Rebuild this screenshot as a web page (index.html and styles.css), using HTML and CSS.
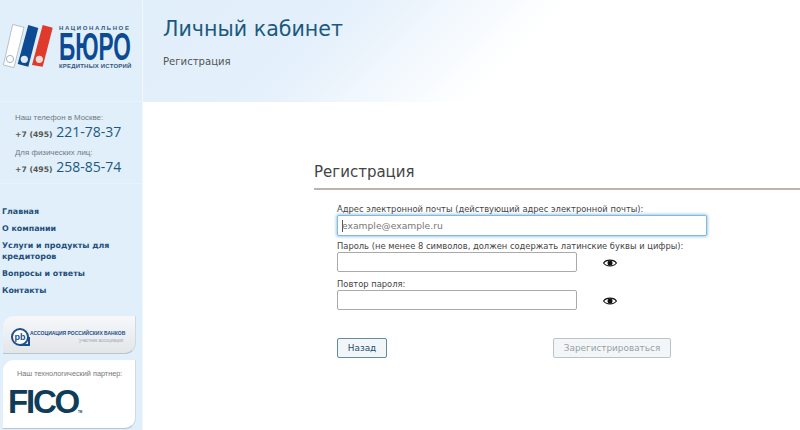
FILE: index.html
```html
<!DOCTYPE html>
<html lang="ru">
<head>
    <meta charset="UTF-8">
    <meta name="viewport" content="width=device-width, initial-scale=1.0">
    <title>Личный кабинет</title>
    <link rel="stylesheet" href="styles.css">
</head>
<body>

    <div class="page">
        <!-- Левая колонка -->
        <aside class="sidebar">
            <div class="logo">
                <svg class="logo-books" width="50" height="44" viewBox="0 0 50 44">
                    <path d="M9.7 .4 L21 3.3 L11 43.6 L.4 41 Z" fill="#fff" stroke="#a9b4bc" stroke-width=".8"/>
                    <circle cx="7" cy="35" r="3.6" fill="none" stroke="#a9b4bc"/>
                    <path d="M25.3 1 L35.3 4 L25.3 42.7 L14.7 40 Z" fill="#0d4a94"/>
                    <circle cx="21.3" cy="35.3" r="3.6" fill="#dfeaf4"/>
                    <path d="M39.7 1 L49.7 3.7 L39.7 42.7 L29 41 Z" fill="#e03a2c"/>
                    <circle cx="36.3" cy="35.3" r="3.6" fill="#f3d9d4"/>
                </svg>
                <div class="logo-text">
                    <span class="logo-top">НАЦИОНАЛЬНОЕ</span>
                    <span class="logo-main">БЮРО</span>
                    <span class="logo-bottom">КРЕДИТНЫХ ИСТОРИЙ</span>
                </div>
            </div>

            <div class="phones">
                <p class="phone-label">Наш телефон в Москве:</p>
                <p class="phone"><span class="phone-code">+7 (495)</span> 221-78-37</p>
                <p class="phone-label second">Для физических лиц:</p>
                <p class="phone"><span class="phone-code">+7 (495)</span> 258-85-74</p>
            </div>

            <nav class="menu">
                <a href="#">Главная</a>
                <a href="#">О компании</a>
                <a href="#">Услуги и продукты для кредиторов</a>
                <a href="#">Вопросы и ответы</a>
                <a href="#">Контакты</a>
            </nav>

            <div class="banner banner-arb">
                <svg class="arb-icon" width="20" height="20" viewBox="0 0 20 20">
                    <circle cx="10" cy="10" r="8" fill="#fff" stroke="#1c4f8c" stroke-width="2"/>
                    <path d="M10 18 H19 V10" fill="none" stroke="#1c4f8c" stroke-width="2"/>
                    <text x="10" y="13" text-anchor="middle" class="arb-pb">pb</text>
                </svg>
                <div class="arb-text">
                    <span class="arb-name">АССОЦИАЦИЯ РОССИЙСКИХ БАНКОВ</span>
                    <span class="arb-sub">участник ассоциации</span>
                </div>
            </div>

            <div class="banner banner-fico">
                <p class="partner">Наш технологический партнер:</p>
                <p class="fico">FICO<span class="fico-tm">TM</span></p>
            </div>
        </aside>

        <!-- Основная часть -->
        <div class="content">
            <header class="top">
                <h1>Личный кабинет</h1>
                <p class="crumb">Регистрация</p>
            </header>

            <main class="main">
                <h2>Регистрация</h2>
                <form class="form">
                    <label for="email">Адрес электронной почты (действующий адрес электронной почты):</label>
                    <input type="text" id="email" class="wide focused" placeholder="example@example.ru">

                    <label for="pass">Пароль (не менее 8 символов, должен содержать латинские буквы и цифры):</label>
                    <div class="pass-row">
                        <input type="password" id="pass">
                        <svg class="eye" width="14" height="10" viewBox="0 0 14 10">
                            <path d="M0.6 5 C3 1.2 11 1.2 13.4 5 C11 8.8 3 8.8 0.6 5 Z" fill="none" stroke="#111" stroke-width="1.2"/>
                            <circle cx="7" cy="5" r="2.5" fill="#111"/>
                        </svg>
                    </div>

                    <label for="pass2">Повтор пароля:</label>
                    <div class="pass-row">
                        <input type="password" id="pass2">
                        <svg class="eye" width="14" height="10" viewBox="0 0 14 10">
                            <path d="M0.6 5 C3 1.2 11 1.2 13.4 5 C11 8.8 3 8.8 0.6 5 Z" fill="none" stroke="#111" stroke-width="1.2"/>
                            <circle cx="7" cy="5" r="2.5" fill="#111"/>
                        </svg>
                    </div>

                    <div class="buttons">
                        <button type="button" class="btn btn-back">Назад</button>
                        <button type="button" class="btn btn-submit" disabled>Зарегистрироваться</button>
                    </div>
                </form>
            </main>
        </div>
    </div>

</body>
</html>
```

FILE: styles.css
```css
body {
    font-family: "DejaVu Sans", Verdana, sans-serif;
    background-color: #fff;
    margin: 0;
    padding: 0;
    color: #444;
    overflow: hidden;
}

p {
    margin: 0;
}

.page {
    display: flex;
    width: 800px;
    height: 430px;
    overflow: hidden;
}

/* sidebar */
.sidebar {
    width: 142px;
    height: 430px;
    flex-shrink: 0;
    background-color: #e1effa;
}

.logo {
    height: 102px;
    box-sizing: border-box;
    padding: 24px 0 0 3px;
    display: flex;
    gap: 6px;
    border-bottom: 1px solid #e9f3fb;
}

.logo-books {
    flex-shrink: 0;
}

.logo-text {
    display: flex;
    flex-direction: column;
    font-family: "Liberation Sans", Arial, sans-serif;
    font-weight: bold;
    color: #0d4a94;
    white-space: nowrap;
}

.logo-top {
    font-size: 6px;
    letter-spacing: 1.6px;
    line-height: 8px;
    color: #33597f;
}

.logo-main {
    font-size: 39px;
    line-height: 30px;
    height: 30px;
    transform: scaleX(0.58);
    transform-origin: left center;
}

.logo-bottom {
    font-size: 6px;
    letter-spacing: 0.2px;
    line-height: 8px;
    color: #33597f;
}

.phones {
    height: 82px;
    box-sizing: border-box;
    padding: 10px 0 0 15px;
    border-bottom: 1px solid #e9f3fb;
}

.phone-label {
    font-family: "Liberation Sans", Arial, sans-serif;
    font-size: 7.9px;
    line-height: 11px;
    color: #707a82;
}

.phone-label.second {
    margin-top: 3px;
}

.phone {
    font-family: "Open Sans", sans-serif;
    font-size: 14px;
    line-height: 18px;
    color: #1b5a7e;
    white-space: nowrap;
}

.phone-code {
    font-family: "DejaVu Sans", Verdana, sans-serif;
    font-size: 7.7px;
    font-weight: bold;
    color: #555;
}

.menu {
    padding: 22px 0 0 2px;
}

.menu a {
    display: block;
    font-size: 7.9px;
    font-weight: bold;
    line-height: 11px;
    color: #1f4f7c;
    text-decoration: none;
    margin-bottom: 6px;
    width: 125px;
}

.banner {
    margin-left: 3px;
    width: 133px;
    box-sizing: border-box;
    border-radius: 11px 0 11px 0;
    border-bottom: 1px solid #b9c6cf;
    border-right: 1px solid #cfdae2;
}

.banner-arb {
    margin-top: 20px;
    height: 38px;
    background: linear-gradient(#f6f8fa, #e3e6e9);
    display: flex;
    align-items: center;
    padding: 4px 0 0 7px;
}

.arb-icon {
    flex-shrink: 0;
}

.arb-text {
    display: flex;
    flex-direction: column;
    font-family: "Liberation Sans", Arial, sans-serif;
    white-space: nowrap;
}

.arb-pb {
    font-family: "Liberation Sans", Arial, sans-serif;
    font-size: 9px;
    font-weight: bold;
    fill: #1c4f8c;
}

.arb-name {
    font-size: 5px;
    font-weight: bold;
    color: #1c4f8c;
    line-height: 8px;
}

.arb-sub {
    font-size: 4.5px;
    color: #9aa7b5;
    line-height: 6px;
    margin-top: 1px;
    text-align: right;
    margin-right: 2px;
}

.banner-fico {
    margin-top: 6px;
    height: 69px;
    background-color: #fff;
    padding: 9px 0 0 5px;
}

.partner {
    font-family: "Liberation Sans", Arial, sans-serif;
    font-size: 7.3px;
    line-height: 10px;
    color: #777;
    padding-left: 9px;
    white-space: nowrap;
}

.fico {
    font-family: "Liberation Sans", Arial, sans-serif;
    font-size: 33px;
    font-weight: bold;
    line-height: 32px;
    letter-spacing: -2.2px;
    color: #0f3d57;
    margin-top: 7px;
}

.fico-tm {
    font-size: 3px;
    letter-spacing: 0;
}

/* content */
.content {
    flex-grow: 1;
    border-left: 1px solid #f0f7fc;
}

.top {
    height: 102px;
    box-sizing: border-box;
    padding: 15px 0 0 20px;
    background: linear-gradient(135deg, #e1effa 0%, #e4f0fb 28%, #fff 56%);
}

h1 {
    margin: 0;
    font-size: 20.6px;
    font-weight: normal;
    line-height: 28px;
    color: #1b5a7e;
}

.crumb {
    margin-top: 12px;
    font-size: 10.1px;
    line-height: 14px;
    color: #555;
}

.main {
    padding: 58px 0 0 171px;
}

h2 {
    margin: 0;
    font-size: 15px;
    font-weight: normal;
    line-height: 24px;
    color: #444;
    padding-bottom: 4px;
    border-bottom: 2px solid #bdb2ac;
}

.form {
    padding: 14px 0 0 23px;
}

label {
    display: block;
    font-size: 8.35px;
    line-height: 11px;
    color: #444;
    white-space: nowrap;
}

input {
    display: block;
    box-sizing: border-box;
    width: 240px;
    height: 20px;
    padding: 0 4px;
    font-family: "DejaVu Sans", Verdana, sans-serif;
    font-size: 9.2px;
    border: 1px solid #aaa;
    border-radius: 2px;
    background-color: #fff;
    margin: 0;
}

input.wide {
    width: 370px;
    height: 21px;
    margin-bottom: 5px;
}

input.focused {
    border-color: #86b7dc;
    box-shadow: 0 0 3px 1px #a5cdea;
    background: linear-gradient(#555, #555) 4px 4px / 1px 12px no-repeat #fff;
}

input::placeholder {
    color: #777;
}

.pass-row {
    display: flex;
    gap: 26px;
    margin-bottom: 7px;
}

.eye {
    margin-top: 6px;
}

.buttons {
    display: flex;
    justify-content: space-between;
    width: 334px;
    margin-top: 28px;
}

.btn {
    height: 20px;
    padding: 0;
    font-family: "DejaVu Sans", Verdana, sans-serif;
    font-size: 8.9px;
    border-radius: 2px;
    background-color: #f2f6f8;
}

.btn-back {
    width: 50px;
    color: #1f4f6c;
    border: 1px solid #5f8ba3;
}

.btn-submit {
    width: 118px;
    color: #9a9fa3;
    border: 1px solid #bcc3c7;
}
```
